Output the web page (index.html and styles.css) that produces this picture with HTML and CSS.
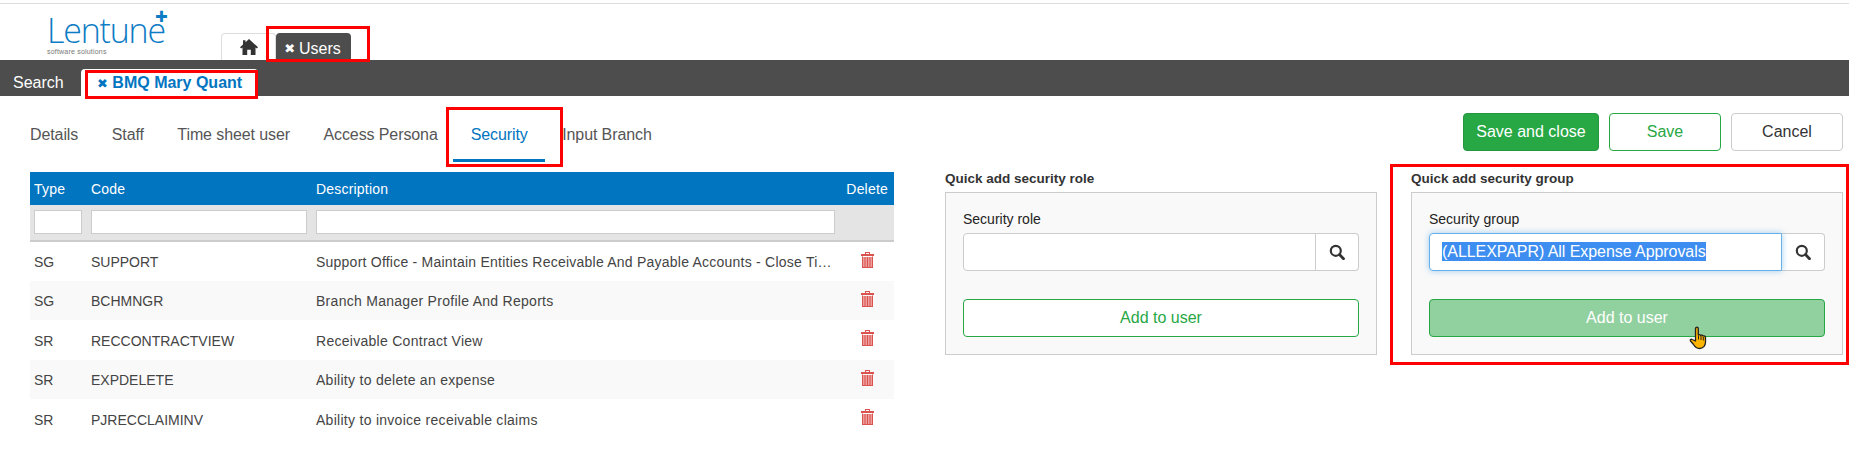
FILE: index.html
```html
<!DOCTYPE html>
<html lang="en">
<head>
<meta charset="utf-8">
<title>Users - BMQ Mary Quant</title>
<link rel="stylesheet" href="styles.css">
</head>
<body>
<svg class="defs" width="0" height="0" aria-hidden="true">
  <symbol id="trash" viewBox="0 0 13 16">
    <path fill="#d9534f" d="M4 0h5v2h4v2H0V2h4zM5 1v1h3V1z"/>
    <path fill="#ec9f9c" d="M1 5h11v10H1z"/>
    <path fill="#d9534f" d="M1 4.500h1v11H1zM3.500 5h1v10h-1zM6 5h1v10H6zM8.500 5h1v10h-1zM11 4.500h1v11h-1zM1 15h11v1H1z"/>
  </symbol>
  <symbol id="search" viewBox="0 0 16 16">
    <circle cx="6.800" cy="6.800" r="5" fill="none" stroke="#333" stroke-width="2.200"/>
    <path d="M10.500 10.500L14.500 14.800" stroke="#333" stroke-width="2.800" stroke-linecap="round"/>
  </symbol>
</svg>

<header class="top">
  <div class="logo">
    <div class="logo-name">Lentune<span class="logo-plus">+</span></div>
    <div class="logo-sub">software solutions</div>
  </div>
  <nav class="app-tabs">
    <a class="app-tab home">
      <svg width="18" height="16" viewBox="0 0 18 16"><path fill="#333" d="M9 0l9 8.200-1.200 1.300L15.500 8.400V16h-4.700v-5.200H7.200V16H2.500V8.400L1.200 9.500 0 8.200l3-2.700V1.200h2.500v2z"/></svg>
    </a>
    <a class="app-tab active"><span class="x">✖</span> Users</a>
  </nav>
</header>

<div class="bar">
  <a class="bar-search">Search</a>
  <a class="bar-tab"><span class="x">✖</span> BMQ Mary Quant</a>
</div>

<main class="content">
  <div class="toolbar">
    <nav class="tabs">
      <a class="tab">Details</a>
      <a class="tab">Staff</a>
      <a class="tab">Time sheet user</a>
      <a class="tab">Access Persona</a>
      <a class="tab current">Security</a>
      <a class="tab">Input Branch</a>
    </nav>
    <div class="actions">
      <button class="btn solid wide">Save and close</button>
      <button class="btn outline">Save</button>
      <button class="btn plain">Cancel</button>
    </div>
  </div>

  <div class="columns">
    <table class="grid">
      <colgroup><col class="c-type"><col class="c-code"><col class="c-desc"><col class="c-del"></colgroup>
      <thead>
        <tr class="head"><th>Type</th><th>Code</th><th>Description</th><th class="del-head">Delete</th></tr>
        <tr class="filter"><td><input></td><td><input></td><td><input></td><td></td></tr>
      </thead>
      <tbody>
        <tr><td>SG</td><td>SUPPORT</td><td class="desc"><div class="clip">Support Office - Maintain Entities Receivable And Payable Accounts - Close Time Sheets And Reports</div></td><td class="del"><svg width="13" height="16"><use href="#trash"/></svg></td></tr>
        <tr><td>SG</td><td>BCHMNGR</td><td class="desc">Branch Manager Profile And Reports</td><td class="del"><svg width="13" height="16"><use href="#trash"/></svg></td></tr>
        <tr><td>SR</td><td>RECCONTRACTVIEW</td><td class="desc">Receivable Contract View</td><td class="del"><svg width="13" height="16"><use href="#trash"/></svg></td></tr>
        <tr><td>SR</td><td>EXPDELETE</td><td class="desc">Ability to delete an expense</td><td class="del"><svg width="13" height="16"><use href="#trash"/></svg></td></tr>
        <tr><td>SR</td><td>PJRECCLAIMINV</td><td class="desc">Ability to invoice receivable claims</td><td class="del"><svg width="13" height="16"><use href="#trash"/></svg></td></tr>
      </tbody>
    </table>

    <section class="quick">
      <h3>Quick add security role</h3>
      <div class="panel">
        <label>Security role</label>
        <div class="lookup">
          <div class="field"></div>
          <span class="find"><svg width="16" height="16"><use href="#search"/></svg></span>
        </div>
        <button class="btn outline add">Add to user</button>
      </div>
    </section>

    <section class="quick">
      <h3>Quick add security group</h3>
      <div class="panel">
        <label>Security group</label>
        <div class="lookup">
          <div class="field focus"><span class="selected">(ALLEXPAPR) All Expense Approvals</span></div>
          <span class="find"><svg width="16" height="16"><use href="#search"/></svg></span>
        </div>
        <button class="btn add hover">Add to user</button>
      </div>
    </section>
  </div>
</main>

<div class="mark m-users"></div>
<div class="mark m-mary"></div>
<div class="mark m-security"></div>
<div class="mark m-group"></div>

<svg class="cursor" width="20" height="24" viewBox="0 0 20 24">
  <path fill="#ffb400" stroke="#222" stroke-width="1.300" stroke-linejoin="round" d="M7 1.500c1.200-.8 2.300 0 2.300 1.200V9c1-.7 2-.5 2.400.4 1-.6 2-.3 2.300.6 1.200-.5 2.500.2 2.500 1.500v4.500c0 3.500-2.300 6.500-6 6.500-3 0-4.500-1.500-6-4l-3-3.500c-.8-1 .5-2.300 1.700-1.500L6.500 15V3c0-.6.100-1.100.5-1.500z"/>
  <path stroke="#222" stroke-width="1" d="M9.500 9.500v4M12 10v4M14.300 11v3.500"/>
</svg>
</body>
</html>
```

FILE: styles.css
```css
* { box-sizing: border-box; }

html, body {
  margin: 0;
  padding: 0;
  height: 100%;
  overflow: hidden;
}

body {
  position: relative;
  background: #fff;
  color: #333;
  font-family: "Liberation Sans", Arial, sans-serif;
  font-size: 14px;
}

.defs { position: absolute; }

.top {
  display: flex;
  align-items: flex-end;
  padding-left: 47px;
  border-top: 1px solid #ddd;
  margin-top: 3px;
  height: 57px;
}

.logo {
  width: 174px;
  height: 46px;
  align-self: flex-start;
  padding-top: 11px;
}

.logo-name {
  position: relative;
  font-family: "Open Sans", sans-serif;
  font-weight: 300;
  font-size: 34px;
  line-height: 30px;
  letter-spacing: -1.200px;
  color: #0e7cc4;
}

.logo-plus {
  position: absolute;
  left: 108px;
  top: -10px;
  font-weight: 800;
  font-size: 22px;
  line-height: 22px;
  letter-spacing: 0;
  color: #0e7cc4;
}

.logo-sub {
  margin-top: 3px;
  font-size: 7px;
  line-height: 7px;
  letter-spacing: .2px;
  color: #777;
}

.app-tabs {
  display: flex;
  height: 27px;
}

.app-tab {
  display: flex;
  align-items: center;
  justify-content: center;
  border-radius: 4px 4px 0 0;
}

.app-tab.home {
  width: 55px;
  border: 1px solid #ddd;
  border-bottom: 0;
}

.app-tab.active {
  width: 75px;
  height: 26px;
  gap: 4px;
  padding: 5px 2px 0 0;
  background: #4d4d4d;
  color: #fff;
  font-size: 16px;
}

.x { font-size: 13px; font-family: "DejaVu Sans", sans-serif; }

.bar {
  height: 36px;
  background: #4d4d4d;
  display: flex;
  align-items: flex-end;
  color: #fff;
}

.bar-search {
  width: 81px;
  height: 36px;
  padding: 5px 0 0 13px;
  line-height: 36px;
  font-size: 16px;
}

.bar-tab {
  width: 177px;
  height: 27px;
  padding: 2px 0 0 16px;
  border-radius: 4px 4px 0 0;
  background: #fff;
  color: #0275c1;
  font-size: 16px;
  font-weight: 700;
  line-height: 24px;
}

.content { padding: 0 6px 0 30px; }

.toolbar {
  height: 76px;
  display: flex;
  justify-content: space-between;
}

.tabs {
  display: flex;
  height: 66px;
  padding-top: 17px;
  color: #555;
  font-size: 16px;
  letter-spacing: -.1px;
}

.tab {
  padding: 12px 0 0;
  margin-right: 33.500px;
  line-height: 20px;
}

.tab.current {
  margin: 0 17px 0 -18px;
  width: 92px;
  text-align: center;
  height: 49px;
  color: #0275c1;
  border-bottom: 3px solid #0275c1;
}

.actions {
  display: flex;
  gap: 10px;
  padding-top: 17px;
}

.btn {
  width: 112px;
  height: 38px;
  font-family: inherit;
  font-size: 16px;
  border-radius: 4px;
  background: #fff;
  border: 1px solid #ccc;
  color: #333;
}

.btn.wide { width: 136px; }
.btn.solid { background: #28a745; border-color: #23963e; color: #fff; }
.btn.outline { border-color: #28a745; color: #28a745; }
.btn.hover { background: #91d09f; border-color: #28a745; color: #fff; }

.columns { display: flex; align-items: flex-start; }

.grid {
  width: 864px;
  table-layout: fixed;
  border-collapse: collapse;
  margin-right: 51px;
}

.c-type { width: 57px; }
.c-code { width: 225px; }
.c-desc { width: 528px; }
.c-del { width: 54px; }

.grid th {
  height: 33px;
  padding: 0 0 0 4px;
  text-align: left;
  font-weight: 400;
  letter-spacing: .2px;
  background: #0275c1;
  color: #fff;
}

.grid th.del-head {
  padding: 0 6px 0 0;
  text-align: right;
}

.filter td {
  height: 36px;
  padding: 0 5px 0 4px;
  background: #e4e4e4;
  border-bottom: 2px solid #ccc;
}

.filter input {
  display: block;
  width: 100%;
  height: 24px;
  border: 1px solid #ccc;
  background: #fff;
  margin-top: -2px;
}

tbody td {
  height: 40px;
  padding: 1px 5px 0 4px;
  color: #444;
}

tbody tr:nth-child(even) td {
  height: 39px;
  background: #f9f9f9;
}

.desc { letter-spacing: .28px; }

td.del {
  padding: 0;
  text-align: center;
}

td.del svg { display: inline-block; vertical-align: -1px; margin-bottom: 2px; }

.clip {
  white-space: nowrap;
  overflow: hidden;
  text-overflow: ellipsis;
  width: 520px;
  letter-spacing: .23px;
}

.quick { width: 432px; }
.quick + .quick { margin-left: 34px; }

.quick h3 {
  margin: 0;
  height: 20px;
  font-size: 13.500px;
  line-height: 13px;
  font-weight: 700;
  color: #333;
}

.panel {
  height: 163px;
  padding: 16px 17px 0;
  background: #f9f9f9;
  border: 1px solid #ccc;
}

.panel label {
  display: block;
  height: 24px;
  line-height: 20px;
  color: #222;
}

.lookup { display: flex; height: 38px; }

.field {
  flex: 1;
  padding-left: 12px;
  background: #fff;
  border: 1px solid #ccc;
  border-radius: 4px 0 0 4px;
  line-height: 36px;
  font-size: 16px;
}

.field.focus {
  border-color: #66afe9;
  box-shadow: 0 0 6px rgba(102, 175, 233, .6);
  position: relative;
}

.selected {
  background: #3d8ef0;
  color: #fff;
  padding: 1px 0;
  letter-spacing: -.06px;
}

.find {
  width: 43px;
  display: flex;
  align-items: center;
  justify-content: center;
  background: #fff;
  border: 1px solid #ccc;
  border-left: 0;
  border-radius: 0 4px 4px 0;
}

.btn.add {
  display: block;
  width: 100%;
  margin-top: 28px;
}

.mark {
  position: absolute;
  border: 3px solid #f00;
  pointer-events: none;
}

.m-users { left: 266px; top: 26px; width: 104px; height: 36px; }
.m-mary { left: 85px; top: 70px; width: 173px; height: 29px; }
.m-security { left: 446px; top: 107px; width: 117px; height: 60px; }
.m-group { left: 1390px; top: 164px; width: 459px; height: 201px; }

.cursor { position: absolute; left: 1689px; top: 326px; }
```
